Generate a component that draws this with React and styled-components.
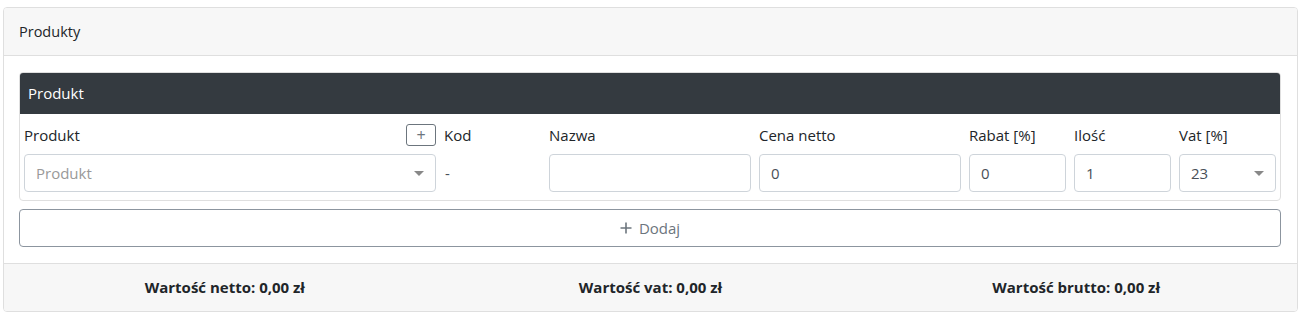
import React from "react";
import styled, { createGlobalStyle } from "styled-components";

const GlobalStyle = createGlobalStyle`
  body {
    margin: 0;
    background: #ffffff;
    font-family: "Open Sans", "Noto Sans", sans-serif;
    font-size: 15px;
    color: #212529;
  }
  * {
    box-sizing: border-box;
  }
`;

const Page = styled.div`
  padding: 7px 9px 6px 3px;
`;

const Card = styled.div`
  border: 1px solid #dfdfdf;
  border-radius: 4px;
  overflow: hidden;
  background: #fff;
`;

const CardHeader = styled.div`
  background: #f7f7f7;
  border-bottom: 1px solid #dfdfdf;
  padding: 12px 15px;
  line-height: 23px;
  font-size: 14.5px;
`;

const CardBody = styled.div`
  padding: 16px 16px 16px 15px;
`;

const ProductCard = styled.div`
  border: 1px solid #dfdfdf;
  border-radius: 4px;
  overflow: hidden;
`;

const DarkHeader = styled.div`
  background: #343a40;
  color: #fff;
  padding: 9px 8px;
  line-height: 23px;
  font-size: 15px;
`;

const ProductBody = styled.div`
  padding: 10px 4px 8px;
`;

const Row = styled.div`
  display: grid;
  grid-template-columns: 4fr 1fr 2fr 2fr 1fr 1fr 1fr;
  margin: 0 -4px;
`;

const Col = styled.div`
  padding: 0 4px;
  display: flex;
  flex-direction: column;
`;

const LabelRow = styled.div`
  display: flex;
  align-items: center;
  justify-content: space-between;
  height: 22px;
  margin-bottom: 8px;
  font-size: 15px;
`;

const SmallButton = styled.button`
  width: 30px;
  height: 22px;
  padding: 0;
  border: 1px solid #6c757d;
  border-radius: 3px;
  background: #fff;
  color: #6c757d;
  font-family: inherit;
  font-size: 16px;
  line-height: 18px;
`;

const Field = styled.div`
  height: 38px;
  border: 1px solid ${(p) => (p.$plain ? "transparent" : "#ced4da")};
  border-radius: 4px;
  display: flex;
  align-items: center;
  justify-content: space-between;
  padding: ${(p) => (p.$plain ? "0" : "0 10px 0 11px")};
  font-size: 15px;
  color: ${(p) => (p.$muted ? "#999" : "#495057")};
`;

const Arrow = styled.span`
  width: 0;
  height: 0;
  border-left: 5px solid transparent;
  border-right: 5px solid transparent;
  border-top: 5px solid #888;
  margin-right: 1px;
`;

const AddButton = styled.button`
  width: 100%;
  height: 38px;
  margin-top: 8px;
  border: 1px solid #8c959f;
  border-radius: 4px;
  background: #fff;
  color: #6c757d;
  font-family: inherit;
  font-size: 15px;
  display: flex;
  align-items: center;
  justify-content: center;
  gap: 7px;
`;

const Footer = styled.div`
  background: #f7f7f7;
  border-top: 1px solid #dfdfdf;
  padding: 11px 8px;
  display: grid;
  grid-template-columns: 1fr 1fr 1fr;
  line-height: 25px;
`;

const Total = styled.div`
  text-align: center;
  font-weight: 700;
  font-size: 15px;
  color: #212529;
`;

const PlusIcon = () => (
  <svg width="12" height="12" viewBox="0 0 12 12">
    <path d="M6 0.5v11M0.5 6h11" stroke="#6c757d" strokeWidth="1.6" />
  </svg>
);

const columns = [
  { label: "Kod", value: "-", plain: true },
  { label: "Nazwa", value: "" },
  { label: "Cena netto", value: "0" },
  { label: "Rabat [%]", value: "0" },
  { label: "Ilość", value: "1" },
  { label: "Vat [%]", value: "23", select: true },
];

export default function App() {
  return (
    <Page>
      <GlobalStyle />
      <Card>
        <CardHeader>Produkty</CardHeader>
        <CardBody>
          <ProductCard>
            <DarkHeader>Produkt</DarkHeader>
            <ProductBody>
              <Row>
                <Col>
                  <LabelRow>
                    <span>Produkt</span>
                    <SmallButton>+</SmallButton>
                  </LabelRow>
                  <Field $muted>
                    <span>Produkt</span>
                    <Arrow />
                  </Field>
                </Col>
                {columns.map((c) => (
                  <Col key={c.label}>
                    <LabelRow>
                      <span>{c.label}</span>
                    </LabelRow>
                    <Field $plain={c.plain}>
                      <span>{c.value}</span>
                      {c.select && <Arrow />}
                    </Field>
                  </Col>
                ))}
              </Row>
            </ProductBody>
          </ProductCard>
          <AddButton>
            <PlusIcon />
            Dodaj
          </AddButton>
        </CardBody>
        <Footer>
          <Total>Wartość netto: 0,00 zł</Total>
          <Total>Wartość vat: 0,00 zł</Total>
          <Total>Wartość brutto: 0,00 zł</Total>
        </Footer>
      </Card>
    </Page>
  );
}
